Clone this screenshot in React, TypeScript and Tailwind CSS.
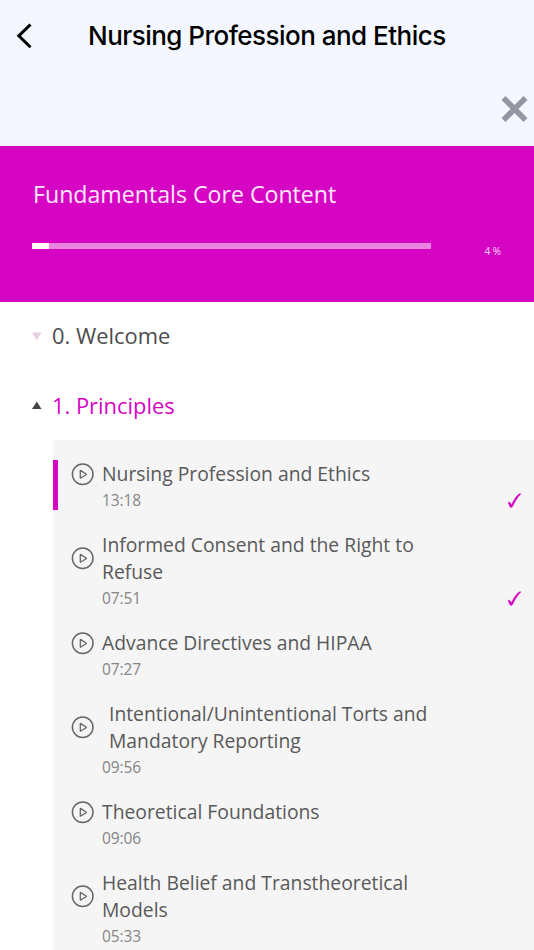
import React from "react";

interface Lesson {
  title: string[];
  duration: string;
  done?: boolean;
  active?: boolean;
  indent?: boolean;
}

const lessons: Lesson[] = [
  { title: ["Nursing Profession and Ethics"], duration: "13:18", done: true, active: true },
  { title: ["Informed Consent and the Right to", "Refuse"], duration: "07:51", done: true },
  { title: ["Advance Directives and HIPAA"], duration: "07:27" },
  { title: ["Intentional/Unintentional Torts and", "Mandatory Reporting"], duration: "09:56", indent: true },
  { title: ["Theoretical Foundations"], duration: "09:06" },
  { title: ["Health Belief and Transtheoretical", "Models"], duration: "05:33" },
];

const PlayIcon = () => (
  <svg width="24" height="24" viewBox="0 0 24 24" fill="none" stroke="#666" strokeWidth="1.5">
    <circle cx="11.7" cy="12.3" r="10.3" />
    <path d="M9.3 8.900v6.800q0 .6.5.3l5.300-3.200q.5-.4 0-.8L9.800 8.600q-.5-.3-.5.300z" strokeWidth="1.3" strokeLinejoin="round" />
  </svg>
);

const LessonRow: React.FC<{ lesson: Lesson }> = ({ lesson }) => (
  <li className="flex">
    <div className={`w-[5px] h-[50px] shrink-0 ${lesson.active ? "bg-[#d605c4]" : ""}`}></div>
    <div className="flex flex-1 pl-[13px]">
      <div className="flex-1">
        <div className="flex items-center">
          <PlayIcon />
          <div className={`text-[19.32px] leading-[27px] text-[#595959] whitespace-nowrap ${lesson.indent ? "ml-[14px]" : "ml-[7px]"}`}>
            {lesson.title.map((line) => (
              <div key={line}>{line}</div>
            ))}
          </div>
        </div>
        <div className="ml-[31px] pt-[2px] text-[15.5px] leading-[22px] tracking-[-0.1px] text-[#858585]">{lesson.duration}</div>
      </div>
      {lesson.done && (
        <svg className="self-end mb-px mr-3" width="16" height="18" viewBox="0 0 16 18" fill="#d605c4" stroke="#d605c4" strokeWidth="0.6">
          <path d="M2.200 10.600c.8-.7 1.800-.5 2.100.5l.9 2.200C7.500 8.600 9.900 4.900 12.300 2.500c.6-.6 1.600-.7 2.500-.6C11.700 5 9 9.400 6.500 14.400c-.5 1-1.900 1.300-2.400.5-.7-1.100-1.200-2.500-1.900-4.300z" />
        </svg>
      )}
    </div>
  </li>
);

export default function App() {
  return (
    <div className="w-full h-[950px] overflow-hidden bg-white font-['Open_Sans',sans-serif]">
      <header className="h-[146px] bg-[#f4f7ff]">
        <div className="flex h-[72px] items-center pl-4">
          <svg width="18" height="28" viewBox="0 0 18 28" fill="none" stroke="#000" strokeWidth="3">
            <path d="M14.500 2.500L2.800 13.800l11.700 11.500" />
          </svg>
          <h1 className="ml-[54px] -mt-px text-[26px] font-medium text-black whitespace-nowrap font-['Inter',sans-serif] tracking-[-0.53px]">
            Nursing Profession and Ethics
          </h1>
        </div>
        <div className="flex justify-end pt-[23px] pr-[5px]">
          <svg width="28" height="28" viewBox="0 0 28 28" stroke="#9297a3" strokeWidth="5.500">
            <path d="M2.500 3l22 22M24.500 3l-22 22" />
          </svg>
        </div>
      </header>
      <section className="h-[156px] bg-[#d605c4] pl-8 pr-[33px] pt-[31px] text-white">
        <h2 className="pl-px text-[23.15px] leading-[34px] text-[#ffeafd]">Fundamentals Core Content</h2>
        <div className="mt-[32px] flex justify-between">
          <div className="h-[5.500px] w-[399px] bg-[#eb83e0]">
            <div className="h-full bg-white" style={{ width: "4.2%" }}></div>
          </div>
          <span className="text-[10px] leading-4 text-[#fbd9f8]">4 %</span>
        </div>
      </section>
      <div className="flex h-[69px] items-center pl-[31.5px] text-[21.9px] text-[#4c4c4c]">
        <svg className="mr-[10.500px] -mt-px" width="10" height="8" viewBox="0 0 10 8" fill="#e8cce2">
          <path d="M0 .5h9.500L4.750 8z" />
        </svg>
        0. Welcome
      </div>
      <div className="flex h-[69px] items-center pl-[31.5px] text-[21.9px] text-[#d605c4]">
        <svg className="mr-[10.500px] -mt-[2px]" width="10" height="8" viewBox="0 0 10 8" fill="#444">
          <path d="M0 8h9.500L4.750 .5z" />
        </svg>
        <span className="pt-px">1. Principles</span>
      </div>
      <ul className="ml-[53px] -mt-[0.5px] flex h-[511px] flex-col gap-5 bg-[#f5f5f5] pt-[20.500px]">
        {lessons.map((lesson) => (
          <LessonRow key={lesson.duration} lesson={lesson} />
        ))}
      </ul>
    </div>
  );
}
